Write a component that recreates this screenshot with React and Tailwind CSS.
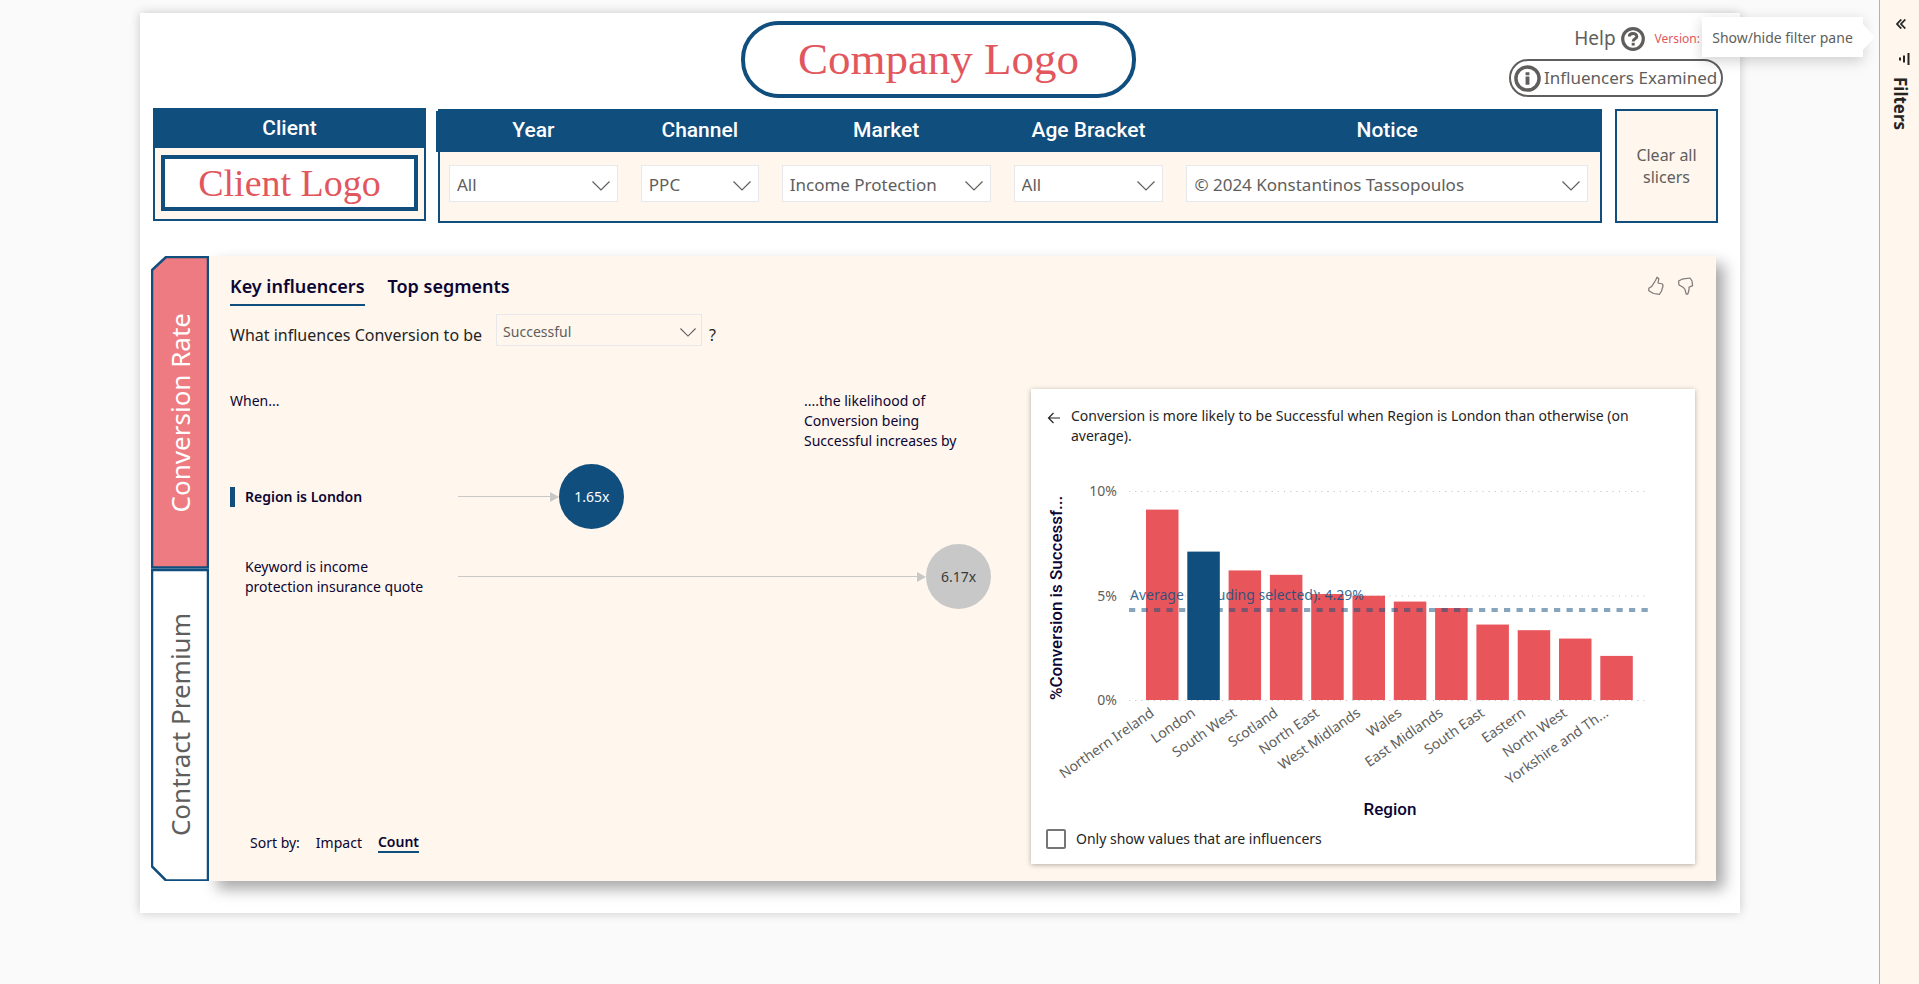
import { useState } from 'react'

const SLICERS = [
  { label: 'Year', options: ['All', '2023', '2024'] },
  { label: 'Channel', options: ['PPC', 'SEO', 'Email'] },
  { label: 'Market', options: ['Income Protection', 'Life Insurance'] },
  { label: 'Age Bracket', options: ['All', '18-30', '31-45', '46-60'] },
  { label: 'Notice', options: ['© 2024 Konstantinos Tassopoulos'] },
]

const INFLUENCERS = [
  { text: 'Region is London', value: '1.65x', reach: 19, selected: true },
  { text: 'Keyword is income protection insurance quote', value: '6.17x', reach: 88, selected: false },
]

const REGIONS = [
  { name: 'Northern Ireland', value: 9.11 },
  { name: 'London', value: 7.1 },
  { name: 'South West', value: 6.2 },
  { name: 'Scotland', value: 5.99 },
  { name: 'North East', value: 5.07 },
  { name: 'West Midlands', value: 4.99 },
  { name: 'Wales', value: 4.71 },
  { name: 'East Midlands', value: 4.4 },
  { name: 'South East', value: 3.61 },
  { name: 'Eastern', value: 3.34 },
  { name: 'North West', value: 2.94 },
  { name: 'Yorkshire and Th...', value: 2.11 },
]

function Chevron({ className }) {
  return (
    <svg viewBox="0 0 18 10" className={className} fill="none" stroke="#605e5c" strokeWidth="1.2" aria-hidden="true">
      <path d="M0.5 0.5 L9 9 L17.5 0.5" />
    </svg>
  )
}

function Slicer({ label, options }) {
  return (
    <div className="relative">
      <select
        aria-label={label}
        className="block w-full h-[37px] appearance-none bg-white border border-[#e6e8ec] pt-[2px] pl-[7px] pr-8 text-[17px] text-[#605e5c]"
      >
        {options.map((o) => (
          <option key={o}>{o}</option>
        ))}
      </select>
      <Chevron className="absolute right-2 top-4 w-[18px] h-[10px] pointer-events-none" />
    </div>
  )
}

function Header() {
  return (
    <header className="grid grid-cols-[1fr_auto_1fr] h-[95px] pr-[3px]">
      <div />
      <div className="mt-2 w-[395px] h-[77px] rounded-[38px] border-[4px] border-[#104e7e] flex items-center justify-center font-['Liberation_Serif',serif] text-[45px] text-[#e2575d]">
        Company Logo
      </div>
      <div className="flex flex-col items-end pr-[14px]">
        <div className="flex items-center h-[46px] pt-[5px] pr-[23px]">
          <a href="#help" className="flex items-center gap-[5px] text-[19px] text-[#605e5c]">
            Help
            <svg viewBox="0 0 24 24" className="w-6 h-6" fill="none" stroke="#605e5c" aria-hidden="true">
              <circle cx="12" cy="12" r="10.3" strokeWidth="3.2" />
              <path d="M8.3 9.6 C8.3 5.6 15.8 5.6 15.8 9.4 C15.8 11.8 12.2 11.8 12.2 14.4" strokeWidth="3" />
              <path d="M12.2 15.8 V18.6" strokeWidth="3" />
            </svg>
          </a>
          <span className="ml-[10px] text-[12px] text-[#e2575d]">Version:</span>
        </div>
        <button
          type="button"
          className="flex items-center w-[214px] h-[38px] rounded-full border-2 border-[#605e5c] pl-[3px] gap-[3px] text-[17px] text-[#605e5c] whitespace-nowrap"
        >
          <svg viewBox="0 0 28 28" className="w-[27px] h-[27px] shrink-0" fill="none" stroke="#605e5c" aria-hidden="true">
            <circle cx="14" cy="14" r="12" strokeWidth="3.6" />
            <path d="M14 7.5 V10.5 M14 12 V20.5" strokeWidth="4" />
          </svg>
          Influencers Examined
        </button>
      </div>
    </header>
  )
}

function SlicerRow() {
  return (
    <div className="flex ml-[13px] mr-[22px]">
      <section className="w-[273px] h-[113px] bg-[#fff6ed] border-2 border-[#104e7e] flex flex-col">
        <h2 className="h-[38px] bg-[#104e7e] text-white text-center font-[Roboto,sans-serif] font-medium text-[21px] leading-[36px]">
          Client
        </h2>
        <div className="mt-[7px] mx-[6px] h-[56px] border-[4px] border-[#104e7e] bg-white flex items-center justify-center font-['Liberation_Serif',serif] text-[38px] leading-none text-[#e2575d]">
          Client Logo
        </div>
      </section>

      <section className="flex-1 ml-3 mt-px h-[114px] bg-[#fff6ed] border-2 border-[#104e7e]">
        <div className="-ml-1 pl-[13px] pr-3 h-[41px] bg-[#104e7e] grid grid-cols-[169fr_118fr_209fr_150fr_402fr] gap-[23px] text-white text-center font-[Roboto,sans-serif] font-medium text-[21px] leading-[38px]">
          {SLICERS.map((s) => (
            <h2 key={s.label} className="whitespace-nowrap">{s.label}</h2>
          ))}
        </div>
        <div className="mt-[13px] pl-[9px] pr-3 grid grid-cols-[169fr_118fr_209fr_150fr_402fr] gap-[23px]">
          {SLICERS.map((s) => (
            <Slicer key={s.label} {...s} />
          ))}
        </div>
      </section>

      <button
        type="button"
        className="ml-[13px] mt-px w-[103px] h-[114px] shrink-0 bg-[#fff6ed] border-2 border-[#104e7e] px-4 text-[16px] leading-[22px] text-[#605e5c]"
      >
        Clear all slicers
      </button>
    </div>
  )
}

function SideTab({ label, points, fill, className }) {
  return (
    <button type="button" className={`relative flex-1 flex items-center justify-center ${className}`}>
      <svg viewBox="0 0 58 312" preserveAspectRatio="none" className="absolute inset-0 w-full h-full" aria-hidden="true">
        <polygon points={points} fill={fill} stroke="#104e7e" strokeWidth="2.5" />
      </svg>
      <span className="relative [writing-mode:vertical-rl] rotate-180 text-[26px] leading-[36px]">{label}</span>
    </button>
  )
}

function InfluencerRow({ text, value, reach, selected }) {
  return (
    <li className="flex items-center h-[65px]">
      <div className={`w-[5px] h-5 mr-[10px] ${selected ? 'bg-[#104e7e]' : ''}`} />
      <div className={`w-[213px] pr-7 text-[14px] leading-5 ${selected ? 'font-semibold' : ''}`}>{text}</div>
      <div className="flex-1 flex items-center">
        <div className="flex items-center" style={{ width: `${reach}%` }}>
          <div className="flex-1 h-px bg-[#c8c8c8]" />
          <svg viewBox="0 0 9 10" className="w-[9px] h-[10px]" aria-hidden="true">
            <path d="M0 0 L9 5 L0 10 Z" fill="#c8c8c8" />
          </svg>
        </div>
        <div
          className={`w-[65px] h-[65px] shrink-0 rounded-full flex items-center justify-center text-[14px] ${selected ? 'bg-[#104e7e] text-white' : 'bg-[#c8c8c8] text-[#3b3a39]'}`}
        >
          {value}
        </div>
      </div>
    </li>
  )
}

function RegionChart() {
  const base = 312
  const unit = 20.9
  const barX = (i) => 115 + i * 41.3
  const barH = (v) => v * unit
  const bar = (r, i) => (
    <rect
      key={r.name}
      x={barX(i)}
      y={base - barH(r.value)}
      width="32.5"
      height={barH(r.value)}
      fill={r.name === 'London' ? '#104e7e' : '#e8565c'}
    />
  )

  return (
    <svg viewBox="0 0 664 432" className="block w-full" role="img" aria-label="%Conversion is Successful by Region">
      {[0, 5, 10].map((t) => (
        <g key={t}>
          <line x1="98" x2="618" y1={base - t * unit + 0.5} y2={base - t * unit + 0.5} stroke="#c8c6c4" strokeDasharray="1.2 5" />
          <text x="86" y={base - t * unit + 5} textAnchor="end" fontSize="14" fill="#605e5c">{`${t}%`}</text>
        </g>
      ))}
      {REGIONS.map((r, i) => (r.name === 'London' ? null : bar(r, i)))}
      <line x1="98" x2="618" y1="222" y2="222" stroke="#104e7e" strokeOpacity="0.5" strokeWidth="4" strokeDasharray="6.25 6.25" />
      <text x="99" y="212" fontSize="14" fill="#104e7e" fillOpacity="0.85">Average (excluding selected): 4.29%</text>
      {bar(REGIONS[1], 1)}
      {REGIONS.map((r, i) => (
        <text
          key={r.name}
          transform={`translate(${barX(i) + 9} 327) rotate(-35)`}
          textAnchor="end"
          fontSize="14"
          fill="#605e5c"
        >
          {r.name}
        </text>
      ))}
      <g className="font-[Roboto,sans-serif] font-medium" fill="#0b0533">
        <text transform="translate(31 312) rotate(-90)" fontSize="17">%Conversion is Successf...</text>
        <text x="359" y="427" textAnchor="middle" fontSize="17">Region</text>
      </g>
    </svg>
  )
}

function DetailCard() {
  const [onlyInfluencers, setOnlyInfluencers] = useState(false)

  return (
    <section className="bg-white shadow-[0_1px_5px_rgba(0,0,0,0.3)] h-[475px] flex flex-col">
      <div className="flex pt-[17px] pl-4 pr-10">
        <button type="button" aria-label="Back" className="w-6 h-6 shrink-0 flex items-center">
          <svg viewBox="0 0 14 12" className="w-[14px] h-3" fill="none" stroke="#252423" strokeWidth="1.2" aria-hidden="true">
            <path d="M13 6 H1.5 M6.5 1 L1.5 6 L6.5 11" />
          </svg>
        </button>
        <p className="h-10 text-[14px] leading-5 text-[#252423]">
          Conversion is more likely to be Successful when Region is London than otherwise (on average).
        </p>
      </div>
      <div className="-mt-[58px]">
        <RegionChart />
      </div>
      <label className="mt-auto mb-[15px] ml-[15px] flex items-center gap-[10px] text-[14px] text-[#252423]">
        <input
          type="checkbox"
          checked={onlyInfluencers}
          onChange={(e) => setOnlyInfluencers(e.target.checked)}
          className="appearance-none w-5 h-5 border-2 border-[#767676] rounded-[2px] checked:bg-[#104e7e]"
        />
        Only show values that are influencers
      </label>
    </section>
  )
}

function InfluencerPanel() {
  return (
    <main className="flex-1 bg-[#fff6ed] shadow-[8px_8px_14px_rgba(0,0,0,0.35)] pt-4 px-[21px] pb-[17px] text-[#0b0533]">
      <div className="flex justify-between">
        <div className="flex gap-[23px] text-[18px] font-semibold">
          <button type="button" className="h-[34px] pb-1 border-b-2 border-[#104e7e]">Key influencers</button>
          <button type="button" className="h-[34px] pb-1 border-b-2 border-transparent">Top segments</button>
        </div>
        <div className="flex gap-3 pt-1 items-start">
          <button type="button" aria-label="Like">
            <svg viewBox="0 0 18 20" className="w-[18px] h-5" fill="none" stroke="#7b7875" strokeWidth="1.2" strokeLinejoin="round">
              <path d="M10 1.2 L11.8 2.8 L11 7 L15.5 8 L16 10 L14.5 15 L12.5 18.3 L6.5 17.5 L1.8 14.8 V12.2 L4.6 10.6 L8.5 4.5 Z" />
            </svg>
          </button>
          <button type="button" aria-label="Dislike">
            <svg viewBox="0 0 18 20" className="w-[18px] h-5" fill="none" stroke="#7b7875" strokeWidth="1.2" strokeLinejoin="round">
              <path d="M1.6 5 L5 3.2 L13 2 L15 5 L15.6 9.6 L12 11.2 L12 14 L10.8 18.2 H9.2 L8 13.5 L6.5 11.6 L2 9 Z" />
            </svg>
          </button>
        </div>
      </div>

      <div className="mt-2 h-8 flex items-center text-[16px] text-[#252423]">
        <label htmlFor="outcome" className="pt-[10px]">What influences Conversion to be</label>
        <div className="relative ml-[14px] mr-[7px]">
          <select
            id="outcome"
            className="block w-[206px] h-8 appearance-none border border-[#e6e8ec] pt-[2px] pl-[6px] text-[14px] text-[#605e5c]"
          >
            <option>Successful</option>
            <option>Unsuccessful</option>
          </select>
          <Chevron className="absolute right-[6px] top-[14px] w-4 h-[9px] pointer-events-none" />
        </div>
        <span className="pt-[10px]">?</span>
      </div>

      <div className="mt-[43px] grid grid-cols-[761fr_664fr] gap-10">
        <section className="flex flex-col pt-[2px] pb-[11px] text-[14px] leading-5">
          <div className="flex justify-between">
            <p>When...</p>
            <p className="w-[187px] pr-5">....the likelihood of Conversion being Successful increases by</p>
          </div>
          <ul className="mt-[13px] flex flex-col gap-[15px]">
            {INFLUENCERS.map((i) => (
              <InfluencerRow key={i.text} {...i} />
            ))}
          </ul>
          <div className="mt-auto pl-5 flex gap-4">
            <span>Sort by:</span>
            <button type="button">Impact</button>
            <button type="button" className="font-semibold border-b-2 border-[#104e7e] leading-[18px]">Count</button>
          </div>
        </section>
        <DetailCard />
      </div>
    </main>
  )
}

function FilterRail() {
  return (
    <aside className="relative w-10 shrink-0 border-l border-[#b3b0ad] bg-[#fff6ed] flex flex-col items-center text-[#252423]">
      <button type="button" aria-label="Show/hide filter pane" className="mt-[19px] ml-[2px]">
        <svg viewBox="0 0 10 10" className="w-[10px] h-[10px]" fill="none" stroke="#252423" strokeWidth="1.8" aria-hidden="true">
          <path d="M5.3 0.5 L1 5 L5.3 9.5 M9.3 0.5 L5 5 L9.3 9.5" />
        </svg>
      </button>
      <svg viewBox="0 0 12 12" className="ml-2 mt-6 w-3 h-3" stroke="#252423" strokeWidth="2" aria-hidden="true">
        <path d="M10.5 0 V12 M6 2.5 V9.5 M2 4.5 V7.5" />
      </svg>
      <h2 className="mt-3 [writing-mode:vertical-rl] text-[17px] leading-6 font-bold">Filters</h2>
      <div role="tooltip" className="absolute right-[56px] top-[17px] w-[161px] h-10 bg-white shadow-[0_4px_14px_rgba(0,0,0,0.18)] flex items-center justify-center text-[14px] text-[#605e5c] whitespace-nowrap">
        Show/hide filter pane
        <svg viewBox="0 0 12 26" className="absolute left-full top-[7px] w-3 h-[26px]" aria-hidden="true">
          <path d="M0 0 L12 13 L0 26 Z" fill="#fff" />
        </svg>
      </div>
    </aside>
  )
}

export default function App() {
  return (
    <div className="flex min-h-screen bg-[#fafafa] font-['Noto_Sans','Open_Sans',sans-serif]">
      <div className="flex-1 pl-[140px] pr-[139px] pt-[13px] pb-[71px]">
        <div className="bg-white shadow-[0_0_10px_rgba(0,0,0,0.2)] pb-8">
          <Header />
          <SlicerRow />
          <div className="mt-[33px] ml-[11px] mr-6 flex">
            <nav className="w-[58px] shrink-0 flex flex-col">
              <SideTab label="Conversion Rate" points="15,1 57,1 57,311 1,311 1,14" fill="#ee7b81" className="text-white" />
              <SideTab label="Contract Premium" points="1,1 57,1 57,311 15,311 1,297" fill="#ffffff" className="text-[#605e5c]" />
            </nav>
            <InfluencerPanel />
          </div>
        </div>
      </div>
      <FilterRail />
    </div>
  )
}
